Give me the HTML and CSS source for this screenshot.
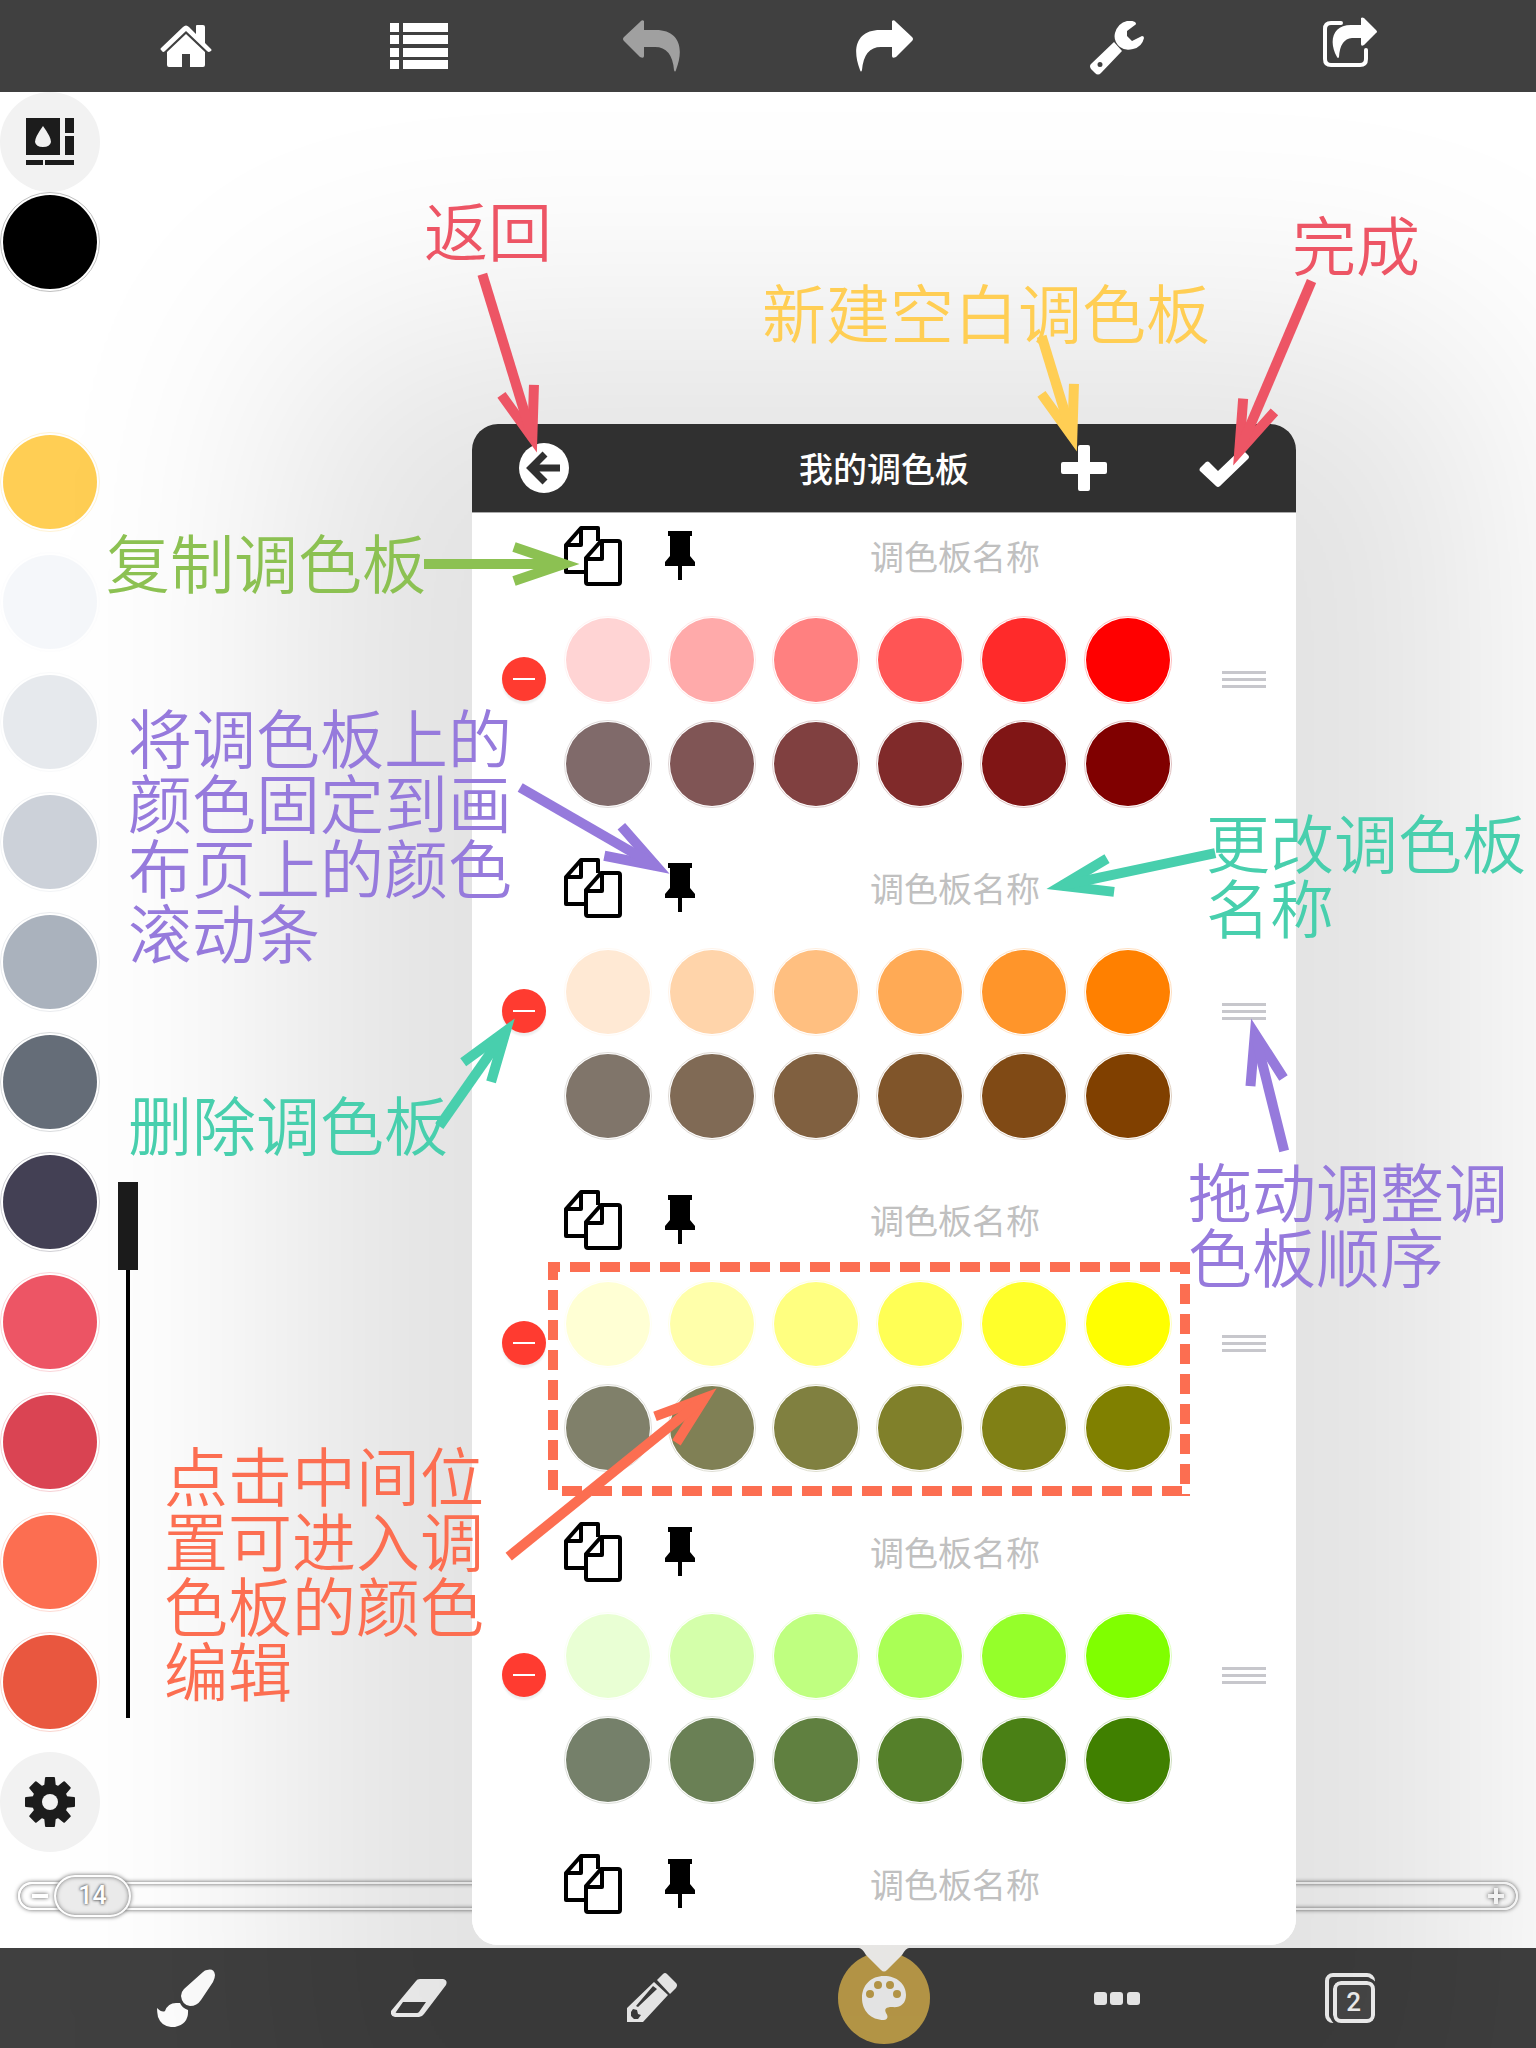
FILE: index.html
```html
<!DOCTYPE html>
<html lang="zh-CN">
<head>
<meta charset="utf-8">
<meta name="viewport" content="width=device-width, initial-scale=1">
<title>我的调色板</title>
<link rel="stylesheet" href="styles.css">
</head>
<body>
<svg class="defs" aria-hidden="true">
  <symbol id="copy" viewBox="0 0 58 60">
    <g fill="none" stroke="#000" stroke-width="4" stroke-linejoin="round">
      <path d="M21 46H2V19L17 2h17v13M2 19h15V2"/>
      <path d="M22 32L37 15h17q2 0 2 2v39q0 2-2 2H24q-2 0-2-2zM22 33h16V15"/>
    </g>
  </symbol>
  <symbol id="pin" viewBox="0 0 30 50">
    <path d="M3 0h24v5h-2v20l5 6v4H17v14h-4V35H0v-4l5-6V5H3z"/>
  </symbol>
  <symbol id="turn" viewBox="0 0 58 52">
    <path d="M37 1q2-2 4 1l16 15q2 2 0 4L41 37q-4 2-4-1v-9H26Q9 27 7 50q-1 3-2 0C-4 27 3 10 25 10h12z"/>
  </symbol>
  <path id="head" d="M-66-17L-16 0L-66 17"/>
</svg>

<header class="bar bar-top">
  <button class="tool" aria-label="主页"><svg width="52" height="42" viewBox="0 0 52 42"><path d="M23 2q3-3 6 0l7 7V1q0-1 1-1h6q2 0 2 2v16l6 6q1 1 0 2l-2 1q-1 0-2-1L26 6 5 26q-2 2-3 0l-1-1q-1-1 0-2z"/><path d="M26 9l19 18v13q0 2-2 2H30V29h-8v13H9q-2 0-2-2V27z"/></svg></button>
  <button class="tool" aria-label="列表"><svg width="58" height="46" viewBox="0 0 58 46"><path d="M0 0h9v9H0zM13 0h45v9H13zM0 12h9v9H0zM13 12h45v9H13zM0 25h9v9H0zM13 25h45v9H13zM0 37h9v9H0zM13 37h45v9H13z"/></svg></button>
  <button class="tool tool-off" aria-label="撤销" disabled><svg class="flip" width="58" height="52"><use href="#turn"/></svg></button>
  <button class="tool" aria-label="重做"><svg width="58" height="52"><use href="#turn"/></svg></button>
  <button class="tool tool-low" aria-label="工具"><svg width="54" height="54" viewBox="0 0 54 54"><path d="M45 1q2 2 0 3l-8 6v5l5 5 10-5q2 0 2 2-2 9-11 11-8 2-13-2-7-6-5-14 3-10 12-12 4-1 8 1z"/><path d="M24 21l8 9-21 22q-3 3-6 0l-4-4q-2-3 0-5zM10 41a2 2 0 1 0 0 5 2 2 0 1 0 0-5z" fill-rule="evenodd"/></svg></button>
  <button class="tool tool-high" aria-label="分享"><svg width="54" height="50" viewBox="0 0 54 50"><path d="M18 6H8q-6 0-6 6v30q0 6 6 6h29q6 0 6-6V33" fill="none" stroke="#fff" stroke-width="4" stroke-linecap="round"/><path d="M38 1q1-1 3 0l12 12q2 2 0 3L41 28q-3 2-3-1v-6H29q-12 1-13 19-1 2-2 0C5 24 10 8 28 8h10z"/></svg></button>
</header>

<main class="canvas">
  <div class="work">
    <aside class="side">
      <div class="current">
        <button class="round" aria-label="颜色面板"><svg width="48" height="48" viewBox="0 0 48 48"><path fill-rule="evenodd" d="M0 0h34v37H0zM17 8Q9 19 9 24q1 5 8 5t8-5q0-5-8-16zM39 0h9v15h-9zM39 18h9v19h-9zM0 42h17v5H0zM19 42h29v5H19z"/></svg></button>
        <button class="swatch" style="--c:#000000" aria-label="当前颜色"></button>
      </div>
      <button class="swatch" style="--c:#ffffff" aria-label="白色"></button>
      <button class="swatch" style="--c:#ffce54" aria-label="黄色"></button>
      <button class="swatch" style="--c:#f5f7fa" aria-label="浅灰一"></button>
      <button class="swatch" style="--c:#e6e9ed" aria-label="浅灰二"></button>
      <button class="swatch" style="--c:#ccd1d9" aria-label="灰色一"></button>
      <button class="swatch" style="--c:#aab2bd" aria-label="灰色二"></button>
      <button class="swatch" style="--c:#656d78" aria-label="深灰"></button>
      <button class="swatch" style="--c:#434054" aria-label="深紫灰"></button>
      <button class="swatch" style="--c:#ed5565" aria-label="浅红"></button>
      <button class="swatch" style="--c:#da4453" aria-label="红色"></button>
      <button class="swatch" style="--c:#fc6e51" aria-label="橙色"></button>
      <button class="swatch" style="--c:#e9573f" aria-label="橙红"></button>
      <button class="round" aria-label="设置"><svg width="50" height="50" viewBox="-25 -25 50 50"><path id="tooth" d="M-6-14L-5-24q0-1 1-1h8q1 0 1 1L6-14V14L5 24q0 1-1 1h-8q-1 0-1-1L-6 14z"/><use href="#tooth" transform="rotate(45)"/><use href="#tooth" transform="rotate(90)"/><use href="#tooth" transform="rotate(135)"/><circle r="18"/><circle r="8" fill="#f2f2f2"/></svg></button>
    </aside>
    <input class="opacity" type="range" min="0" max="100" value="0" aria-label="不透明度">
  </div>

  <div class="size">
    <svg class="sign" width="16" height="16" viewBox="0 0 16 16"><path d="M0 6h16v4H0z"/></svg>
    <input type="range" id="size" min="1" max="515" value="14" aria-label="画笔大小">
    <output class="size-value" for="size">14</output>
    <svg class="sign" width="16" height="16" viewBox="0 0 16 16"><path d="M0 6h6V0h4v6h6v4h-6v6H6v-6H0z"/></svg>
  </div>

  <section class="popover">
    <div class="panel">
      <header class="panel-head">
        <button class="plain" aria-label="返回"><svg width="50" height="50" viewBox="0 0 50 50"><circle cx="25" cy="25" r="25" fill="#fff"/><path d="M41 25H13M26 11L12 25l14 14" fill="none" stroke="#303030" stroke-width="7"/></svg></button>
        <h1>我的调色板</h1>
        <div class="actions">
          <button class="plain" aria-label="新建"><svg width="46" height="46" viewBox="0 0 46 46"><path d="M19 0h8q2 0 2 2v15h15q2 0 2 2v8q0 2-2 2H29v15q0 2-2 2h-8q-2 0-2-2V29H2q-2 0-2-2v-8q0-2 2-2h15V2q0-2 2-2z" fill="#fff"/></svg></button>
          <button class="plain" aria-label="完成"><svg width="50" height="38" viewBox="0 0 50 38"><path d="M1 19l6-6q2-1 3 0l9 9L41 1q1-1 3 0l5 5q2 2 0 4L21 37q-2 2-4 0L1 22q-1-1 0-3z" fill="#fff"/></svg></button>
        </div>
      </header>

      <div class="list">
        <article class="palette">
          <button class="plain delete" aria-label="删除"></button>
          <div class="middle">
            <div class="tools">
              <button class="plain" aria-label="复制"><svg width="58" height="60"><use href="#copy"/></svg></button>
              <button class="plain" aria-label="固定"><svg width="30" height="50"><use href="#pin"/></svg></button>
              <input class="name" type="text" placeholder="调色板名称" aria-label="调色板名称">
            </div>
            <ul class="colors">
              <li style="--c:#ffd4d4"></li><li style="--c:#ffaaaa"></li><li style="--c:#ff8080"></li><li style="--c:#ff5555"></li><li style="--c:#ff2a2a"></li><li style="--c:#ff0000"></li>
              <li style="--c:#806a6a"></li><li style="--c:#805555"></li><li style="--c:#804040"></li><li style="--c:#802a2a"></li><li style="--c:#801515"></li><li style="--c:#800000"></li>
            </ul>
          </div>
          <button class="plain handle" aria-label="拖动排序"></button>
        </article>
        <article class="palette">
          <button class="plain delete" aria-label="删除"></button>
          <div class="middle">
            <div class="tools">
              <button class="plain" aria-label="复制"><svg width="58" height="60"><use href="#copy"/></svg></button>
              <button class="plain" aria-label="固定"><svg width="30" height="50"><use href="#pin"/></svg></button>
              <input class="name" type="text" placeholder="调色板名称" aria-label="调色板名称">
            </div>
            <ul class="colors">
              <li style="--c:#ffe9d4"></li><li style="--c:#ffd4aa"></li><li style="--c:#ffbf80"></li><li style="--c:#ffaa55"></li><li style="--c:#ff952a"></li><li style="--c:#ff8000"></li>
              <li style="--c:#80756a"></li><li style="--c:#806a55"></li><li style="--c:#806040"></li><li style="--c:#80552a"></li><li style="--c:#804a15"></li><li style="--c:#804000"></li>
            </ul>
          </div>
          <button class="plain handle" aria-label="拖动排序"></button>
        </article>
        <article class="palette">
          <button class="plain delete" aria-label="删除"></button>
          <div class="middle">
            <div class="tools">
              <button class="plain" aria-label="复制"><svg width="58" height="60"><use href="#copy"/></svg></button>
              <button class="plain" aria-label="固定"><svg width="30" height="50"><use href="#pin"/></svg></button>
              <input class="name" type="text" placeholder="调色板名称" aria-label="调色板名称">
            </div>
            <ul class="colors">
              <li style="--c:#ffffd4"></li><li style="--c:#ffffaa"></li><li style="--c:#ffff80"></li><li style="--c:#ffff55"></li><li style="--c:#ffff2a"></li><li style="--c:#ffff00"></li>
              <li style="--c:#80806a"></li><li style="--c:#808055"></li><li style="--c:#808040"></li><li style="--c:#80802a"></li><li style="--c:#808015"></li><li style="--c:#808000"></li>
            </ul>
          </div>
          <button class="plain handle" aria-label="拖动排序"></button>
        </article>
        <article class="palette">
          <button class="plain delete" aria-label="删除"></button>
          <div class="middle">
            <div class="tools">
              <button class="plain" aria-label="复制"><svg width="58" height="60"><use href="#copy"/></svg></button>
              <button class="plain" aria-label="固定"><svg width="30" height="50"><use href="#pin"/></svg></button>
              <input class="name" type="text" placeholder="调色板名称" aria-label="调色板名称">
            </div>
            <ul class="colors">
              <li style="--c:#e9ffd4"></li><li style="--c:#d4ffaa"></li><li style="--c:#bfff80"></li><li style="--c:#aaff55"></li><li style="--c:#95ff2a"></li><li style="--c:#80ff00"></li>
              <li style="--c:#75806a"></li><li style="--c:#6a8055"></li><li style="--c:#608040"></li><li style="--c:#55802a"></li><li style="--c:#4a8015"></li><li style="--c:#408000"></li>
            </ul>
          </div>
          <button class="plain handle" aria-label="拖动排序"></button>
        </article>
        <article class="palette palette-last">
          <div class="middle">
            <div class="tools">
              <button class="plain" aria-label="复制"><svg width="58" height="60"><use href="#copy"/></svg></button>
              <button class="plain" aria-label="固定"><svg width="30" height="50"><use href="#pin"/></svg></button>
              <input class="name" type="text" placeholder="调色板名称" aria-label="调色板名称">
            </div>
          </div>
        </article>
      </div>
    </div>
    <svg class="pointer" width="50" height="27" viewBox="0 0 50 27"><path d="M0 0h50v3q-3 0-7 7L28 25q-3 3-6 0L7 10Q3 3 0 3z" fill="#e7e6e4"/></svg>
  </section>
</main>

<footer class="bar bar-bottom">
  <button class="tool" aria-label="画笔"><svg width="58" height="58" viewBox="0 0 58 58"><path d="M50 1q7-2 8 5 0 3-2 7L44 31q-4 6-11 6-8-1-9-10 0-4 3-7L46 3q2-2 4-2z"/><path d="M0 39q5 5 8 3 3-8 11-8h4q2 5 8 7 1 14-13 17-13 1-17-10-1-5-1-9z"/></svg></button>
  <button class="tool" aria-label="橡皮"><svg width="56" height="38" viewBox="0 0 56 38"><path fill-rule="evenodd" d="M25 2q1-2 4-2h23q5 1 3 6L33 35q-2 3-5 3H4q-5-1-4-6zM12 23L5 33q-1 1 1 1h20q1 0 2-1l7-10z"/></svg></button>
  <button class="tool" aria-label="铅笔"><svg width="50" height="50" viewBox="0 0 50 50"><path fill-rule="evenodd" d="M27 9l14 13-25 27H0V35zM26 13L9 33l2 1 19-18zM6 36l-2 3v4l3 3h4l3-4-3-1-1-4z"/><path d="M30 7l6-6q2-2 4 0l9 9q2 2 0 5l-6 6z"/></svg></button>
  <button class="tool" aria-label="调色板"><span class="disc"><svg width="44" height="44" viewBox="0 0 44 44"><path fill-rule="evenodd" d="M22 0c13 0 22 8 22 19 0 9-6 13-14 12-6 0-8 2-6 6 3 4 1 7-2 7C9 44 0 35 0 22S9 0 22 0zM16 5a4 4 0 1 0 0 8 4 4 0 1 0 0-8zM28 5a4 4 0 1 0 0 8 4 4 0 1 0 0-8zM8 14a4 4 0 1 0 0 8 4 4 0 1 0 0-8zM35 14a4 4 0 1 0 0 8 4 4 0 1 0 0-8z"/></svg></span></button>
  <button class="tool" aria-label="更多"><svg width="46" height="13" viewBox="0 0 46 13"><rect width="13" height="13" rx="3"/><rect x="16" width="13" height="13" rx="3"/><rect x="33" width="13" height="13" rx="3"/></svg></button>
  <button class="tool" aria-label="图层"><span class="layers"><span class="layer-no">2</span></span></button>
</footer>

<div class="notes">
  <svg class="arrows" width="1536" height="2048" viewBox="0 0 1536 2048">
    <path class="coral frame frame-8" d="M548 1267h642M1185 1262v234"/>
    <path class="coral frame frame-2" d="M553 1262v228"/>
    <path class="coral frame" d="M562 1491h620"/>
    <g class="rose" transform="translate(537 453) rotate(73)"><use href="#head"/><path d="M-187 0h171"/></g>
    <g class="gold" transform="translate(1077 452) rotate(73)"><use href="#head"/><path d="M-121 0h105"/></g>
    <g class="rose" transform="translate(1233 466) rotate(113)"><use href="#head"/><path d="M-201 0h185"/></g>
    <g class="lime" transform="translate(580 564)"><use href="#head"/><path d="M-156 0h140"/></g>
    <g class="violet" transform="translate(670 874) rotate(30)"><use href="#head"/><path d="M-173 0h157"/></g>
    <g class="teal" transform="translate(1046 889) rotate(168)"><use href="#head"/><path d="M-173 0h157"/></g>
    <g class="teal" transform="translate(515 1018) rotate(-55)"><use href="#head"/><path d="M-132 0h116"/></g>
    <g class="violet" transform="translate(1251 1018) rotate(-104)"><use href="#head"/><path d="M-137 0h121"/></g>
    <g class="coral" transform="translate(717 1388) rotate(-39)"><use href="#head"/><path d="M-268 0h252"/></g>
  </svg>
  <p class="note rose n-back">返回</p>
  <p class="note rose n-done">完成</p>
  <p class="note gold n-new">新建空白调色板</p>
  <p class="note lime n-copy">复制调色板</p>
  <p class="note violet n-pin">将调色板上的<br>颜色固定到画<br>布页上的颜色<br>滚动条</p>
  <p class="note teal n-rename">更改调色板<br>名称</p>
  <p class="note teal n-delete">删除调色板</p>
  <p class="note violet n-drag">拖动调整调<br>色板顺序</p>
  <p class="note coral n-edit">点击中间位<br>置可进入调<br>色板的颜色<br>编辑</p>
</div>
</body>
</html>
```
FILE: styles.css
```css
* { box-sizing: border-box; }

body {
  margin: 0;
  min-height: 100vh;
  display: flex;
  flex-direction: column;
  position: relative;
  background: #fff;
  font-family: "Noto Sans CJK SC", "Noto Sans", sans-serif;
}

button { border: 0; padding: 0; margin: 0; background: none; font: inherit; color: inherit; }
svg { display: block; }
.defs { position: absolute; width: 0; height: 0; }

/* toolbars */
.bar {
  display: grid;
  grid-template-columns: repeat(6, 1fr);
  align-items: center;
  padding: 0 70px;
  background: #404040;
}
.bar-top { height: 92px; position: relative; z-index: 3; }
.bar-bottom { height: 100px; }
.tool { display: grid; place-items: center; height: 100%; color: #fff; }
.tool svg { fill: currentColor; }
.tool-off { color: #a0a0a0; }
.tool-low { padding-top: 4px; }
.tool-high { padding-bottom: 8px; }
.flip { transform: scaleX(-1); }
.disc {
  display: grid;
  place-items: center;
  width: 92px;
  height: 92px;
  border-radius: 50%;
  background: #c8a64e;
}
.layers { display: grid; position: relative; width: 50px; height: 50px; justify-items: end; align-items: end; }
.layers::before {
  content: "";
  position: absolute;
  left: 0;
  top: 0;
  width: 42px;
  height: 42px;
  border: 4px solid #fff;
  border-radius: 8px;
}
.layer-no {
  position: relative;
  width: 42px;
  height: 42px;
  border: 4px solid #fff;
  border-radius: 8px;
  outline: 3px solid #404040;
  background: #4b4b4b;
  font: 500 26px/34px Roboto, sans-serif;
  text-align: center;
}

/* canvas */
.canvas { flex: 1; position: relative; display: flex; flex-direction: column; justify-content: space-between; }
.work { display: flex; gap: 18px; align-items: flex-end; }
.side { display: flex; flex-direction: column; gap: 20px; }
.current { display: flex; flex-direction: column; }
.round {
  display: grid;
  place-items: center;
  width: 100px;
  height: 100px;
  border-radius: 50%;
  background: #f2f2f2;
}
.round svg { fill: #1c1c1c; }
.swatch, .colors li {
  border: 1px solid color-mix(in srgb, var(--c) 25%, #fff);
  border-radius: 50%;
  background: linear-gradient(var(--c), var(--c)) content-box, #fff;
}
.swatch { width: 100px; height: 100px; padding: 2px; }

.opacity {
  appearance: none;
  writing-mode: vertical-lr;
  width: 20px;
  height: 536px;
  margin: 0 0 134px;
  background: linear-gradient(#000, #000) center / 4px 100% no-repeat;
}
.opacity::-webkit-slider-thumb { appearance: none; width: 20px; height: 88px; background: #1c1c1c; }

.size {
  position: relative;
  display: flex;
  align-items: center;
  justify-content: space-between;
  height: 28px;
  margin: 0 18px 38px;
  padding: 0 12px;
  border: 2px solid #fff;
  border-radius: 14px;
  box-shadow: 0 0 4px #666, inset 0 0 4px #666;
}
.sign { fill: #fff; overflow: visible; filter: drop-shadow(0 0 2px #555); }
.size input {
  appearance: none;
  position: absolute;
  left: -2px;
  top: -9px;
  height: 42px;
  margin: 0;
  width: calc(100% + 4px);
  background: none;
}
.size input::-webkit-slider-thumb {
  appearance: none;
  width: 77px;
  height: 42px;
  border: 2px solid #fff;
  border-radius: 21px;
  background: #ececec;
  box-shadow: 0 0 4px #666, inset 0 0 4px #777;
}
.size-value {
  position: absolute;
  left: 34px;
  top: -9px;
  width: 77px;
  font: 500 25px/42px Roboto, sans-serif;
  text-align: center;
  color: #fff;
  text-shadow: 0 0 3px #555, 0 0 3px #777;
}

/* popover */
.popover {
  position: absolute;
  z-index: 2;
  top: 332px;
  bottom: 3px;
  left: calc(50% + 116px);
  width: 824px;
  transform: translateX(-50%);
  border-radius: 26px;
  box-shadow: 0 90px 240px 190px rgba(0, 0, 0, .115);
}
.panel {
  height: 100%;
  display: flex;
  flex-direction: column;
  border-radius: 26px;
  overflow: hidden;
  background: #fff;
}
.pointer { position: absolute; left: 387px; top: 100%; }
.panel-head {
  display: grid;
  grid-template-columns: 1fr auto 1fr;
  align-items: center;
  height: 89px;
  padding: 0 47px;
  background: #303030;
  border-bottom: 1px solid #aaa;
}
.panel-head h1 { margin: 0; font-size: 34px; line-height: 44px; font-weight: 500; color: #fff; }
.actions { display: flex; align-items: center; justify-content: flex-end; gap: 92px; }

.list { flex: 1; min-height: 0; overflow: hidden; }
.palette {
  display: grid;
  grid-template-columns: 44px 608px 1fr;
  column-gap: 18px;
  align-items: center;
  height: 332px;
  padding: 0 30px;
}
.palette-last { height: 103px; }
.palette-last .middle { grid-column: 2; }
.middle { align-self: start; }
.tools { display: flex; align-items: center; gap: 43px; height: 86px; margin-bottom: 17px; }
.name {
  flex: 1;
  min-width: 0;
  border: 0;
  padding: 0;
  background: none;
  text-align: center;
  font: 400 34px/44px "Noto Sans CJK SC", sans-serif;
  color: #333;
}
.name::placeholder { color: #c0c0c0; opacity: 1; }
.colors {
  display: grid;
  grid-template-columns: repeat(6, 88px);
  gap: 16px;
  margin: 0;
  padding: 0;
  list-style: none;
}
.colors li { height: 88px; padding: 1px; }
.delete {
  display: grid;
  place-items: center;
  width: 44px;
  height: 44px;
  border-radius: 50%;
  background: #ff3b30;
  box-shadow: 0 3px 2px #eee;
}
.delete::before { content: ""; width: 22px; height: 2px; background: #fff; }
.handle {
  justify-self: end;
  width: 44px;
  height: 17px;
  border: solid #c7c7cc;
  border-width: 3px 0;
  background: linear-gradient(#c7c7cc, #c7c7cc) center / 100% 3px no-repeat;
}

/* hand-written notes pinned on the canvas */
.notes { position: absolute; z-index: 4; inset: 0; overflow: hidden; pointer-events: none; }
.arrows { position: absolute; left: 0; top: 0; fill: none; stroke: currentColor; stroke-width: 10; stroke-miterlimit: 10; }
.arrows g, .arrows path { stroke: currentColor; }
.frame { stroke-dasharray: 20 10; }
.frame-8 { stroke-dashoffset: 8px; }
.frame-2 { stroke-dashoffset: 2px; }
.note { position: absolute; margin: 0; font-size: 64px; line-height: 65px; font-weight: 350; white-space: nowrap; }
.rose { color: #ed5565; }
.gold { color: #ffce54; }
.lime { color: #8cc152; }
.violet { color: #967adc; }
.teal { color: #48cfad; }
.coral { color: #fc6e51; }
.n-back { left: 424px; top: 196px; }
.n-done { left: 1292px; top: 210px; }
.n-new { left: 762px; top: 278px; }
.n-copy { left: 106px; top: 528px; }
.n-pin { left: 128px; top: 703px; }
.n-rename { left: 1206px; top: 808px; }
.n-delete { left: 128px; top: 1090px; }
.n-drag { left: 1188px; top: 1157px; }
.n-edit { left: 164px; top: 1441px; }
```
